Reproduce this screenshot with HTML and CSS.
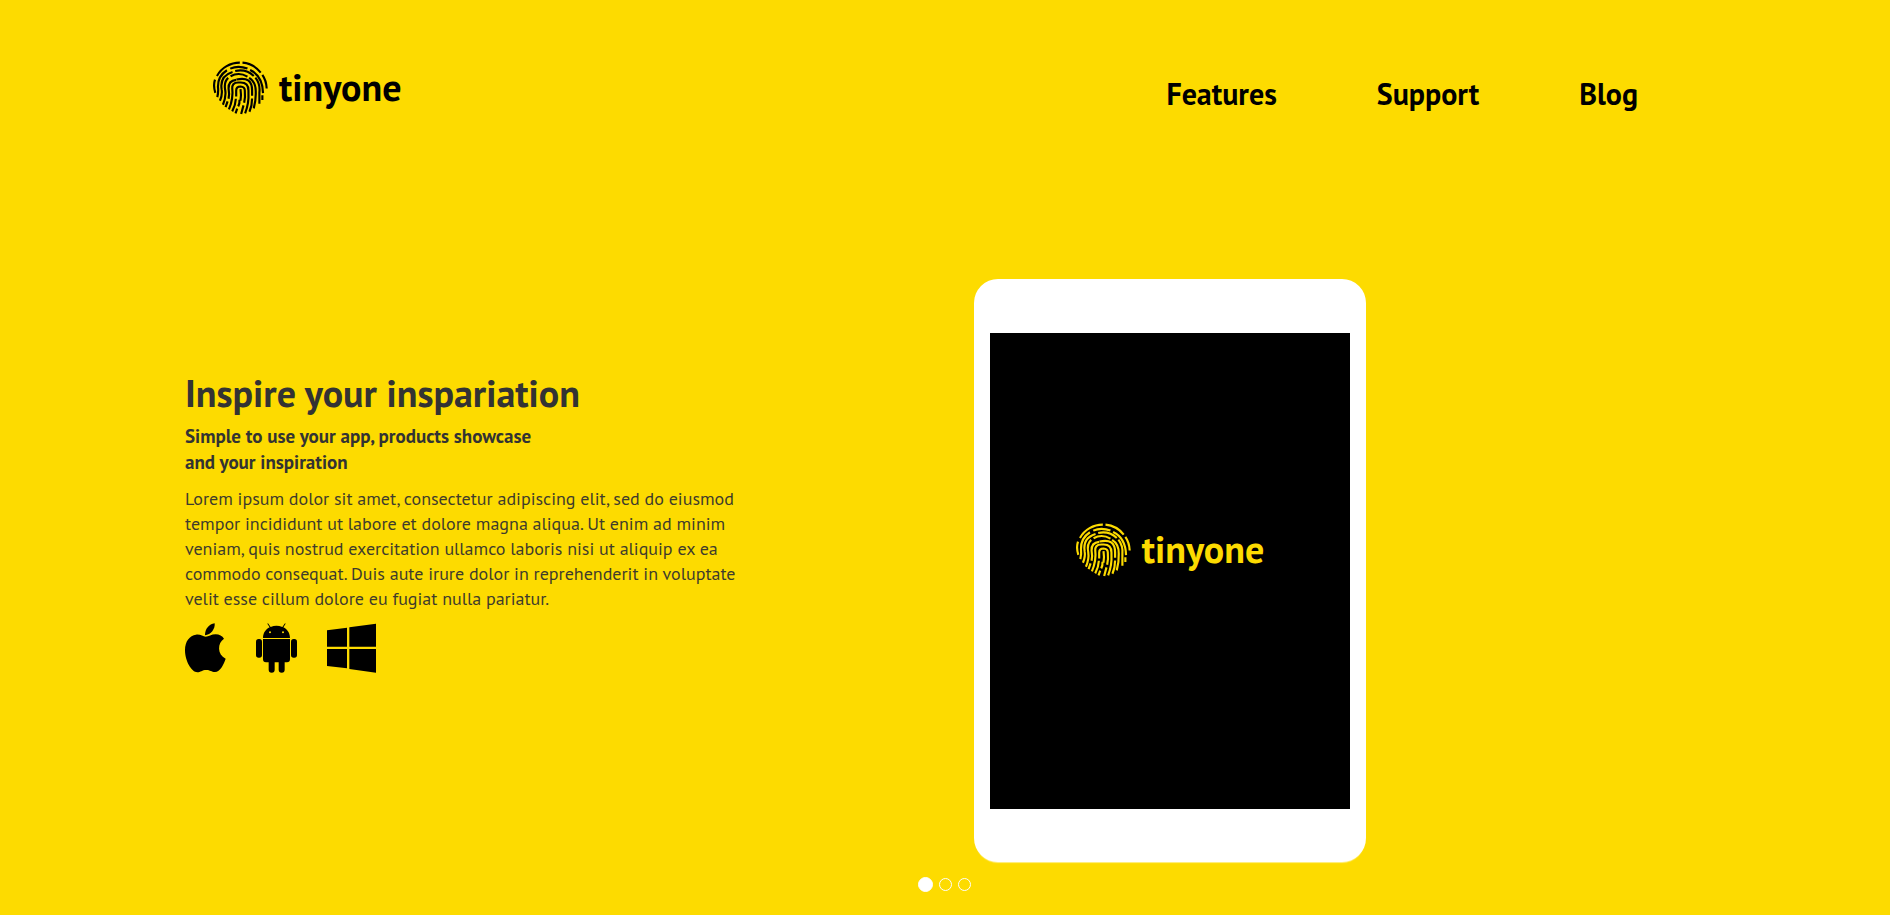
FILE: index.html
```html
<!DOCTYPE html>
<html lang="en">
<head>
<meta charset="utf-8">
<title>tinyone</title>
<link rel="stylesheet" href="styles.css">
</head>
<body>
<svg width="0" height="0" class="sprite" aria-hidden="true">
  <symbol id="fingerprint" viewBox="14 19 166 166">
    <g fill="none" stroke="currentColor" stroke-width="6.5">
      <path d="M26 64A79 79 0 0 1 95 24M103 24A79 79 0 0 1 158 54M163 61Q175 78 176 102M20 75Q14 94 21 115"/>
      <path d="M66 42Q90 31 118 42M56 47Q28 65 29 98Q31 112 27 128M126 46Q164 64 165 116M163 122V137"/>
      <path d="M73 52Q34 64 40 104Q43 120 35 139M81 49Q114 42 137 64M142 69Q157 88 154 114V148"/>
      <path d="M60 70Q46 82 51 108Q54 127 44 151M67 65Q92 51 118 66M123 70Q144 83 143 112Q144 136 137 162"/>
      <path d="M84 76Q60 78 61 102Q64 117 61 133M58 141L52 158M85 75Q132 64 132 108V124M132 132Q132 154 124 172"/>
      <path d="M72 99Q76 132 62 165M72 104Q70 84 90 84H98Q121 84 121 108V116Q123 145 111 177"/>
      <path d="M84 126V108Q84 96 97 96Q110 97 110 108Q112 127 108 145M83 133Q82 153 72 171M106 153L99 179"/>
      <path d="M97 104Q100 122 97 138M94 136Q95 147 90 156M87 163L82 177"/>
    </g>
  </symbol>
</svg>

<header class="container header">
  <a class="brand" href="#"><svg class="brand-mark" aria-hidden="true"><use href="#fingerprint"/></svg><span>tinyone</span></a>
  <nav class="nav">
    <a href="#features">Features</a>
    <a href="#support">Support</a>
    <a href="#blog">Blog</a>
  </nav>
</header>

<main class="container hero">
  <section class="intro">
    <h1>Inspire your inspariation</h1>
    <h2>Simple to use your app, products showcase<br>and your inspiration</h2>
    <p>Lorem ipsum dolor sit amet, consectetur adipiscing elit, sed do eiusmod<br>tempor incididunt ut labore et dolore magna aliqua. Ut enim ad minim<br>veniam, quis nostrud exercitation ullamco laboris nisi ut aliquip ex ea<br>commodo consequat. Duis aute irure dolor in reprehenderit in voluptate<br>velit esse cillum dolore eu fugiat nulla pariatur.</p>
    <div class="platforms">
      <a href="#apple" aria-label="Apple">
        <svg width="41" height="50" viewBox="0 0 123 150"><path d="M60 37C60 18 72 3 89 1C91 18 78 35 60 37ZM33 35C46 33 54 41 62 41C71 41 79 34 92 34C103 34 112 39 117 47C97 60 96 94 122 107C117 123 105 147 90 147C79 147 76 141 64 141C51 141 47 148 37 148C20 148 0 114 0 82C0 54 14 38 33 35Z"/></svg>
      </a>
      <a href="#android" aria-label="Android">
        <svg width="41" height="50" viewBox="0 0 123 150"><path d="M21 45C21 30 29 19 41 13L34 2L36 1L44 12Q61 5 79 12L87 1L89 2L82 13C94 19 102 30 102 45ZM42 25A3 3 0 1 0 42 31A3 3 0 1 0 42 25ZM81 25A3 3 0 1 0 81 31A3 3 0 1 0 81 25Z" fill-rule="evenodd"/><path d="M21 48H102V109Q102 118 93 118H86V140A9 9 0 0 1 68 140V118H56V140A9 9 0 0 1 38 140V118H30Q21 118 21 109Z"/><rect y="48" width="18" height="56" rx="8"/><rect x="105" y="48" width="18" height="56" rx="8"/></svg>
      </a>
      <a href="#windows" aria-label="Windows">
        <svg width="49" height="50" viewBox="0 0 147 150"><path d="M0 22L60 14V71H0ZM67 13L147 2V71H67ZM0 78H60V136L0 129ZM67 78H147V149L67 138Z"/></svg>
      </a>
    </div>
  </section>
  <section class="showcase">
    <div class="tablet">
      <div class="screen">
        <div class="brand brand-light"><svg class="brand-mark" aria-hidden="true"><use href="#fingerprint"/></svg><span>tinyone</span></div>
      </div>
    </div>
  </section>
</main>

<div class="dots">
  <button class="dot active" type="button" aria-label="Slide 1"></button>
  <button class="dot" type="button" aria-label="Slide 2"></button>
  <button class="dot" type="button" aria-label="Slide 3"></button>
</div>
</body>
</html>
```
FILE: styles.css
```css
* { box-sizing: border-box; }
body {
  margin: 0;
  background: #fddb00;
  color: #333;
  font-family: "PT Sans", "Noto Sans", sans-serif;
}
a { color: inherit; text-decoration: none; }
.sprite { position: absolute; }
.container { max-width: 1520px; margin: 0 auto; }

.header {
  display: flex;
  justify-content: space-between;
  align-items: flex-start;
  padding: 61px 67px 0 28px;
}
.brand {
  display: flex;
  align-items: flex-start;
  gap: 11px;
  color: #000;
  font-size: 38px;
  font-weight: 700;
  line-height: 52px;
}
.brand-mark { width: 55px; height: 55px; }
.brand-light { color: #fddb00; }
.nav {
  display: flex;
  gap: 100px;
  padding-top: 13px;
  color: #000;
  font-size: 30px;
  font-weight: 700;
  line-height: 40px;
}

.hero {
  display: grid;
  grid-template-columns: 1fr 1fr;
  padding-top: 163px;
}
.intro { padding-top: 89px; }
h1, h2, p { margin: 0; white-space: nowrap; }
h1 { font-size: 38px; line-height: 50px; }
h2 { margin-top: 5px; font-size: 19px; line-height: 26px; }
p { margin-top: 11px; color: #3f3c2c; font-size: 18px; line-height: 25px; }
.platforms { display: flex; gap: 30px; margin-top: 12px; }
.platforms svg { display: block; fill: #000; }

.showcase { padding-left: 29px; }
.tablet {
  width: 392px;
  padding: 54px 16px 53px;
  background: #fff;
  border-radius: 24px;
  box-shadow: 0 2px 1px -1px #fff08a;
}
.screen {
  display: flex;
  align-items: flex-start;
  justify-content: center;
  height: 476px;
  padding-top: 190px;
  background: #000;
}

.dots {
  display: flex;
  justify-content: center;
  align-items: center;
  gap: 6px;
  padding: 15px 2px 15px 0;
}
.dot {
  width: 13px;
  height: 13px;
  padding: 0;
  border: 1px solid #fff;
  border-radius: 50%;
  background: transparent;
}
.dot.active { width: 15px; height: 15px; background: #fff; }
```
